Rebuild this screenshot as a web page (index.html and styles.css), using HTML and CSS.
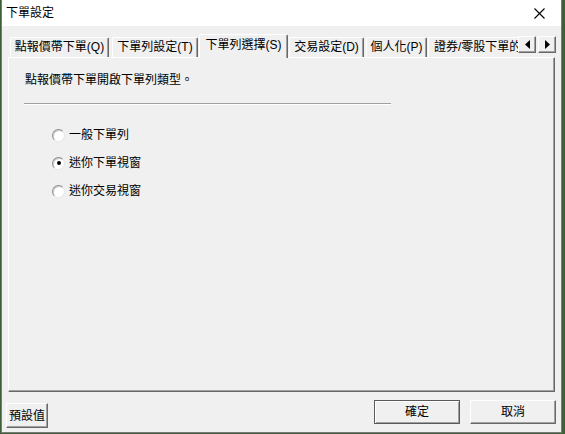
FILE: index.html
```html
<!DOCTYPE html>
<html lang="zh-Hant">
<head>
<meta charset="utf-8">
<title>下單設定</title>
<link rel="stylesheet" href="styles.css">
</head>
<body>
<div class="window">
  <div class="titlebar">
    <span class="title">下單設定</span>
    <span class="close">
      <svg width="11" height="11" viewBox="0 0 11 11"><path d="M0.5 0.5L10.5 10.5M10.5 0.5L0.5 10.5" stroke="#000" stroke-width="1.1" fill="none"/></svg>
    </span>
  </div>
  <div class="body">
    <div class="tabs">
      <div class="strip">
        <div class="tab t1">點報價帶下單(Q)</div>
        <div class="tab t2">下單列設定(T)</div>
        <div class="tab t3 selected">下單列選擇(S)</div>
        <div class="tab t4">交易設定(D)</div>
        <div class="tab t5">個人化(P)</div>
        <div class="tab t6">證券/零股下單的</div>
      </div>
      <div class="arrows">
        <span class="arrow"><svg width="5" height="9" viewBox="0 0 5 9"><path d="M5 0L0 4.5L5 9Z" fill="#000"/></svg></span>
        <span class="arrow"><svg width="5" height="9" viewBox="0 0 5 9"><path d="M0 0L5 4.5L0 9Z" fill="#000"/></svg></span>
      </div>
    </div>
    <div class="panel">
      <div class="heading">點報價帶下單開啟下單列類型。</div>
      <div class="sep"></div>
      <div class="options">
        <label class="opt"><span class="radio"></span><span>一般下單列</span></label>
        <label class="opt"><span class="radio checked"></span><span>迷你下單視窗</span></label>
        <label class="opt"><span class="radio"></span><span>迷你交易視窗</span></label>
      </div>
    </div>
    <div class="footer">
      <button class="btn small">預設值</button>
      <div class="right">
        <button class="btn wide default">確定</button>
        <button class="btn wide">取消</button>
      </div>
    </div>
  </div>
</div>
</body>
</html>
```
FILE: styles.css
```css
html, body {
  margin: 0;
  height: 100%;
}
body {
  background: #3f5f38;
  font-family: "Liberation Sans", "Noto Sans CJK TC", sans-serif;
  font-size: 12px;
  color: #000;
  overflow: hidden;
}
.window {
  margin-left: 1px;
  width: 561px;
  height: 433px;
  border: 1px solid #7a7a7a;
  border-top: 0;
  background: #f0f0f0;
  display: flex;
  flex-direction: column;
  box-sizing: border-box;
}
.titlebar {
  height: 26px;
  flex: 0 0 26px;
  background: #fff;
  display: flex;
  align-items: center;
  justify-content: space-between;
  padding-left: 4px;
}
.title {
  font-size: 12px;
  line-height: 16px;
}
.close {
  width: 44px;
  height: 26px;
  display: flex;
  align-items: center;
  justify-content: center;
}
.body {
  flex: 1;
  padding: 8px 6px 0 6px;
  display: flex;
  flex-direction: column;
}
.tabs {
  position: relative;
  height: 23px;
  flex: 0 0 23px;
}
.strip {
  display: flex;
  height: 24px;
  padding-left: 2px;
  position: relative;
  z-index: 2;
}
.tab {
  flex: 0 0 auto;
  box-sizing: border-box;
  height: 20px;
  margin-top: 3px;
  border-left: 1px solid #fff;
  border-top: 1px solid #fff;
  border-right: 1px solid #696969;
  box-shadow: inset -1px 0 #a0a0a0;
  border-radius: 2px 2px 0 0;
  text-align: center;
  line-height: 18px;
  white-space: nowrap;
}
.t1 { width: 99px; }
.t2 { width: 86px; margin-left: 3px; }
.t3 { width: 89px; margin-left: 1px; }
.t4 { width: 75px; margin-left: 1px; }
.t5 { width: 61px; margin-left: 2px; }
.t6 { margin-left: 1px; text-align: left; padding-left: 5px; border-right: 0; box-shadow: none; }
.tab.selected {
  height: 24px;
  margin-top: 0;
  line-height: 18px;
  padding-top: 1px;
  background: #f0f0f0;
}
.arrows {
  position: absolute;
  right: -1px;
  top: 2px;
  display: flex;
  gap: 2px;
  z-index: 3;
}
.arrow {
  width: 18px;
  height: 17px;
  box-sizing: border-box;
  background: #f0f0f0;
  border-left: 1px solid #fff;
  border-top: 1px solid #fff;
  border-right: 1px solid #696969;
  border-bottom: 1px solid #696969;
  box-shadow: inset -1px -1px #a0a0a0;
  display: flex;
  align-items: center;
  justify-content: center;
}
.panel {
  height: 335px;
  flex: 0 0 335px;
  box-sizing: border-box;
  border-left: 1px solid #fff;
  border-top: 1px solid #fff;
  border-right: 1px solid #696969;
  border-bottom: 1px solid #696969;
  box-shadow: inset -1px -1px #a0a0a0;
  padding: 14px 0 0 16px;
  position: relative;
  z-index: 1;
}
.heading {
  line-height: 16px;
  height: 16px;
}
.sep {
  margin: 15px 0 0 -1px;
  width: 367px;
  height: 1px;
  background: #a0a0a0;
  border-bottom: 1px solid #fff;
}
.options {
  margin-top: 22px;
  display: flex;
  flex-direction: column;
  gap: 12px;
}
.opt {
  display: flex;
  align-items: center;
  height: 16px;
  line-height: 16px;
  padding-left: 27px;
}
.radio {
  width: 13px;
  height: 13px;
  box-sizing: border-box;
  border-radius: 50%;
  border: 1px solid;
  border-color: #8c8c8c #e6e6e6 #e6e6e6 #8c8c8c;
  background: #fff;
  box-shadow: inset 1px 1px #cfcfcf;
  margin-right: 4px;
  display: flex;
  align-items: center;
  justify-content: center;
}
.radio.checked::after {
  content: "";
  width: 4px;
  height: 4px;
  border-radius: 50%;
  background: #000;
}
.footer {
  flex: 1;
  display: flex;
  justify-content: space-between;
  align-items: flex-start;
}
.btn {
  font-family: "Liberation Sans", "Noto Sans CJK TC", sans-serif;
  font-size: 12px;
  color: #000;
  background: #f0f0f0;
  box-sizing: border-box;
  border-left: 1px solid #fff;
  border-top: 1px solid #fff;
  border-right: 1px solid #696969;
  border-bottom: 1px solid #696969;
  box-shadow: inset -1px -1px #a0a0a0;
  padding: 0;
  margin: 0;
  line-height: 16px;
}
.btn.small {
  width: 42px;
  height: 25px;
  margin-top: 11px;
  margin-left: -2px;
}
.right {
  display: flex;
  gap: 10px;
  margin-top: 8px;
  margin-right: -1px;
}
.btn.wide {
  width: 86px;
  height: 24px;
}
.btn.default {
  border: 1px solid #5a5a5a;
  box-shadow: inset 1px 1px #fff, inset -1px -1px #a0a0a0;
}
```
